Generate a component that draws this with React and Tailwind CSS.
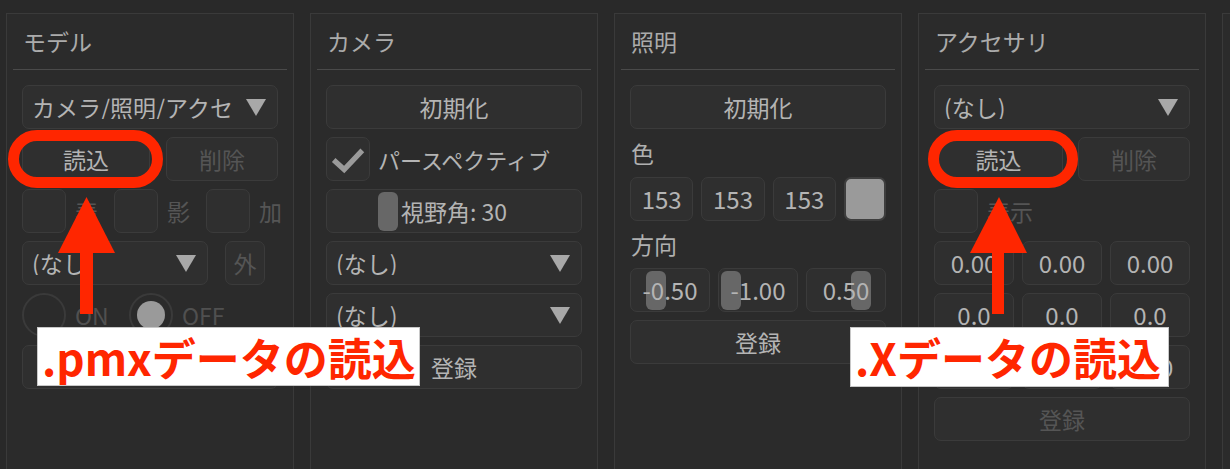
import React from "react";

const Tri = () => (
  <svg width="20" height="17" viewBox="0 0 20 17" className="shrink-0">
    <polygon points="0,0 20,0 10,17" fill="#a8a8a8" />
  </svg>
);

const Btn = ({ children, className = "", disabled = false }) => (
  <div
    className={`flex h-[44px] items-center justify-center rounded-[7px] border border-[#3b3b3b] bg-[#2f2f2f] text-[23px] ${
      disabled ? "text-[#555555]" : "text-[#b4b4b4]"
    } ${className}`}
  >
    {children}
  </div>
);

const Dropdown = ({ text, className = "" }) => (
  <div
    className={`flex h-[44px] items-center gap-[14px] rounded-[7px] border border-[#3b3b3b] bg-[#2f2f2f] pl-[9px] pr-[11px] text-[23px] text-[#b4b4b4] ${className}`}
  >
    <span className="min-w-0 flex-1 overflow-hidden whitespace-nowrap">{text}</span>
    <Tri />
  </div>
);

const Check = ({ checked = false }) => (
  <div className="flex h-[44px] w-[44px] shrink-0 items-center justify-center rounded-[7px] border border-[#3b3b3b] bg-[#2f2f2f]">
    {checked && (
      <svg width="44" height="44" viewBox="0 0 44 44">
        <polyline points="7,23 18,33 37,13" fill="none" stroke="#9a9a9a" strokeWidth="5.5" strokeLinejoin="miter" />
      </svg>
    )}
  </div>
);

const Thumb = ({ left, top = "top-[2px]" }) => (
  <div className={`absolute ${top} h-[39px] w-[20px] rounded-[6px] bg-[#676767]`} style={{ left }} />
);

const NumBox = ({ value, thumb, className = "" }) => (
  <div className={`relative flex h-[44px] items-center justify-center rounded-[7px] border border-[#3b3b3b] bg-[#2f2f2f] text-[24px] text-[#b4b4b4] ${className}`}>
    {thumb !== undefined && <Thumb left={thumb} />}
    <span className="relative">{value}</span>
  </div>
);

const Panel = ({ title, children }) => (
  <div className="h-[470px] w-[288px] shrink-0 border border-[#3a3a3a] bg-[#2b2b2b]">
    <div className="mx-[6px] flex h-[56px] items-center border-b border-[#4a4a4a] pl-[10px] text-[23px] text-[#ababab]">
      {title}
    </div>
    <div className="flex flex-col gap-[8px] px-[15px] pt-[15px]">{children}</div>
  </div>
);

export default function App() {
  return (
    <div className="relative h-[469px] w-[1230px] overflow-hidden bg-[#292929] font-['Noto_Sans_CJK_JP',sans-serif] leading-none">
      <div className="flex gap-[16px] pl-[6px] pt-[13px]">
        {/* モデル */}
        <Panel title="モデル">
          <Dropdown text="カメラ/照明/アクセサリ" />
          <div className="flex gap-[16px]">
            <Btn className="w-[128px]">読込</Btn>
            <Btn className="flex-1" disabled>
              削除
            </Btn>
          </div>
          <div className="flex">
            {["表", "影", "加"].map((l) => (
              <div key={l} className="flex w-[92px] shrink-0 items-center gap-[9px]">
                <Check />
                <span className="text-[23px] text-[#555555]">{l}</span>
              </div>
            ))}
          </div>
          <div className="flex gap-[17px]">
            <Dropdown text="(なし)" className="w-[186px]" />
            <Btn className="w-[40px]" disabled>
              外
            </Btn>
          </div>
          <div className="flex items-center">
            <div className="flex w-[107px] items-center gap-[9px]">
              <div className="h-[44px] w-[44px] rounded-full border-2 border-[#3a3a3a]" />
              <span className="text-[23px] text-[#505050]">ON</span>
            </div>
            <div className="flex items-center gap-[9px]">
              <div className="flex h-[44px] w-[44px] items-center justify-center rounded-full border-2 border-[#3a3a3a]">
                <div className="h-[28px] w-[28px] rounded-full bg-[#9a9a9a]" />
              </div>
              <span className="text-[23px] text-[#505050]">OFF</span>
            </div>
          </div>
          <Btn>登録</Btn>
        </Panel>

        {/* カメラ */}
        <Panel title="カメラ">
          <Btn>初期化</Btn>
          <div className="flex items-center gap-[8px]">
            <Check checked />
            <span className="text-[22px] text-[#b4b4b4]">パースペクティブ</span>
          </div>
          <div className="relative flex h-[44px] items-center justify-center rounded-[7px] border border-[#3b3b3b] bg-[#2f2f2f] text-[23px] text-[#b4b4b4]">
            <Thumb left={51} />
            <span className="relative">視野角: 30</span>
          </div>
          <Dropdown text="(なし)" />
          <Dropdown text="(なし)" />
          <Btn>登録</Btn>
        </Panel>

        {/* 照明 */}
        <Panel title="照明">
          <Btn>初期化</Btn>
          <div className="flex h-[32px] items-center pl-px text-[23px] text-[#b0b0b0]">色</div>
          <div className="flex gap-[8px]">
            <NumBox value="153" className="flex-1" />
            <NumBox value="153" className="flex-1" />
            <NumBox value="153" className="flex-1" />
            <div className="h-[44px] w-[42px] shrink-0 rounded-[7px] border-2 border-[#3e3e3e] bg-[#9a9a9a]" />
          </div>
          <div className="flex h-[31px] items-center pl-px text-[23px] text-[#b0b0b0]">方向</div>
          <div className="grid grid-cols-3 gap-[8px]">
            <NumBox value="-0.50" thumb={15} />
            <NumBox value="-1.00" thumb={2} />
            <NumBox value="0.50" thumb={44} />
          </div>
          <Btn>登録</Btn>
        </Panel>

        {/* アクセサリ */}
        <Panel title="アクセサリ">
          <Dropdown text="(なし)" />
          <div className="flex gap-[15px]">
            <Btn className="w-[129px]">読込</Btn>
            <Btn className="flex-1" disabled>
              削除
            </Btn>
          </div>
          <div className="flex items-center gap-[9px]">
            <Check />
            <span className="text-[23px] text-[#555555]">表示</span>
          </div>
          <div className="grid grid-cols-3 gap-[8px]">
            <NumBox value="0.00" />
            <NumBox value="0.00" />
            <NumBox value="0.00" />
            <NumBox value="0.0" />
            <NumBox value="0.0" />
            <NumBox value="0.0" />
            <NumBox value="1.00" />
            <NumBox value="1.00" />
            <NumBox value="1.00" />
          </div>
          <Btn disabled>登録</Btn>
        </Panel>

        <div className="h-[470px] w-[288px] shrink-0 border border-[#3a3a3a] bg-[#2b2b2b]" />
      </div>

      {/* annotations */}
      <div className="absolute left-[8px] top-[130px] h-[58px] w-[155px] rounded-full border-[11px] border-[#ff2600]" />
      <div className="absolute left-[928px] top-[130px] h-[58px] w-[150px] rounded-full border-[11px] border-[#ff2600]" />

      <svg className="absolute left-[58px] top-[197px]" width="57" height="117" viewBox="0 0 57 117">
        <polygon points="28.5,0 0,56 57,56" fill="#ff2600" />
        <rect x="22" y="55" width="13" height="62" fill="#ff2600" />
      </svg>
      <svg className="absolute left-[970px] top-[197px]" width="57" height="117" viewBox="0 0 57 117">
        <polygon points="29,0 0,56 57,56" fill="#ff2600" />
        <rect x="22" y="55" width="12" height="62" fill="#ff2600" />
      </svg>

      <div className="absolute left-[37px] top-[327px] flex h-[59px] w-[383px] items-center border border-[#c8c8c8] bg-white pl-[4px] text-[44px] font-bold text-[#ff2600]">
        .pmxデータの読込
      </div>
      <div className="absolute left-[850px] top-[327px] flex h-[60px] w-[319px] items-center border border-[#c8c8c8] bg-white pl-[4px] text-[44px] font-bold text-[#ff2600]">
        .Xデータの読込
      </div>
    </div>
  );
}
